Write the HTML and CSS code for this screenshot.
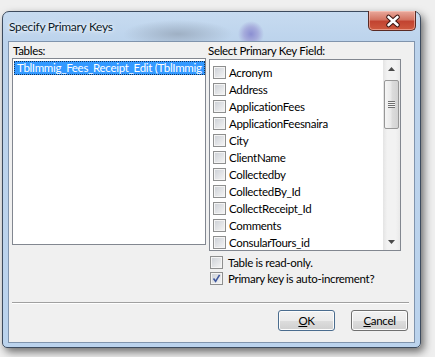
FILE: index.html
```html
<!DOCTYPE html>
<html lang="en">
<head>
    <meta charset="UTF-8" />
    <title>Specify Primary Keys</title>
    <link rel="stylesheet" href="styles.css">
</head>
<body>
<div class="window">
    <div class="titlebar">
        <span class="title">Specify Primary Keys</span>
        <div class="close">
            <svg width="48" height="20" viewBox="0 0 48 20">
                <path d="M19.5 6 L28.5 14 M28.5 6 L19.5 14" stroke="#3a1410" stroke-width="4.6" stroke-linecap="round" fill="none"/>
                <path d="M19.5 6 L28.5 14 M28.5 6 L19.5 14" stroke="#fff" stroke-width="2.6" stroke-linecap="round" fill="none"/>
            </svg>
        </div>
    </div>
    <div class="client">
        <div class="panes">
            <div class="pane pane-tables">
                <div class="label">Tables:</div>
                <div class="listbox tables">
                    <div class="item selected">TblImmig_Fees_Receipt_Edit (TblImmig</div>
                </div>
            </div>
            <div class="pane pane-fields">
                <div class="label">Select Primary Key Field:</div>
                <div class="listbox fields">
                    <ul class="field-list">
                        <li><span class="box"></span>Acronym</li>
                        <li><span class="box"></span>Address</li>
                        <li><span class="box"></span>ApplicationFees</li>
                        <li><span class="box"></span>ApplicationFeesnaira</li>
                        <li><span class="box"></span>City</li>
                        <li><span class="box"></span>ClientName</li>
                        <li><span class="box"></span>Collectedby</li>
                        <li><span class="box"></span>CollectedBy_Id</li>
                        <li><span class="box"></span>CollectReceipt_Id</li>
                        <li><span class="box"></span>Comments</li>
                        <li><span class="box"></span>ConsularTours_id</li>
                    </ul>
                    <div class="scrollbar">
                        <div class="arrow">
                            <svg width="7" height="4" viewBox="0 0 7 4"><path d="M0 4 L3.5 0 L7 4 Z" fill="#4a4a4a"/></svg>
                        </div>
                        <div class="thumb"><span class="grip"></span></div>
                        <div class="track"></div>
                        <div class="arrow">
                            <svg width="7" height="4" viewBox="0 0 7 4"><path d="M0 0 L7 0 L3.5 4 Z" fill="#4a4a4a"/></svg>
                        </div>
                    </div>
                </div>
                <div class="options">
                    <div class="check"><span class="box"></span>Table is read-only.</div>
                    <div class="check">
                        <span class="box">
                            <svg width="11" height="11" viewBox="0 0 11 11"><path d="M2.5 5.5 L4.6 8.3 L8.6 1.8" stroke="#3f579e" stroke-width="1.6" fill="none"/></svg>
                        </span>Primary key is auto-increment?
                    </div>
                </div>
            </div>
        </div>
        <div class="separator"></div>
        <div class="buttons">
            <button class="btn default"><u>O</u>K</button>
            <button class="btn"><u>C</u>ancel</button>
        </div>
    </div>
</div>
</body>
</html>
```

FILE: styles.css
```css
* {
    box-sizing: border-box;
}
body {
    margin: 0;
    height: 357px;
    overflow: hidden;
    background: #efefef;
    font-family: Lato, "Open Sans", sans-serif;
    font-size: 11.5px;
    letter-spacing: -0.3px;
    color: #000;
}
.window {
    margin: 11px 0 0 2px;
    width: 419px;
    height: 337px;
    padding: 0 5px 4px;
    border: 1px solid #3d4b5e;
    border-radius: 7px 7px 5px 5px;
    background:
        radial-gradient(circle at 248px 22px, #8b8fd2 0, #a6acdc 7px, rgba(190,205,235,0) 13px),
        radial-gradient(ellipse 55px 14px at 175px 22px, #9fb0c4 0, rgba(180,198,220,0) 100%),
        linear-gradient(to bottom, #c7dbf0, #bcd3ec 30px, #bbd3ed);
    box-shadow: 3px 4px 9px rgba(0, 0, 0, 0.55);
}
.titlebar {
    height: 29px;
    display: flex;
    justify-content: space-between;
    align-items: flex-start;
}
.title {
    padding: 8px 0 0 1px;
    line-height: 14px;
    font-size: 12px;
    color: #0b1a2b;
    text-shadow: 0 0 6px #fff, 0 0 3px #fff;
}
.close {
    width: 48px;
    height: 20px;
    margin: -1px -1px 0 0;
    border: 1px solid #5a2a24;
    border-top: none;
    border-radius: 0 0 5px 5px;
    background: linear-gradient(to bottom, #e9a99c, #d47563 45%, #c24431 55%, #cf5a3f);
    box-shadow: inset 0 0 0 1px rgba(255, 210, 200, 0.5);
}
.close svg {
    display: block;
}
.client {
    height: 302px;
    border: 1px solid #8094ad;
    background: #f0f0f0;
}
.panes {
    display: flex;
    gap: 3px;
    padding: 1px 0 0 3px;
}
.pane-tables {
    width: 194px;
}
.pane-fields {
    width: 192px;
}
.label {
    height: 15px;
    line-height: 15px;
    padding-left: 1px;
}
.pane-fields .label {
    height: 16px;
    margin-left: -2px;
}
.listbox {
    background: #fff;
    border: 1px solid #828790;
    overflow: hidden;
}
.tables {
    height: 187px;
    padding: 2px 0 0 1px;
}
.item {
    height: 14px;
    line-height: 12px;
    padding-left: 2px;
    white-space: nowrap;
    overflow: hidden;
}
.selected {
    background: #3399ff;
    color: #fff;
    border: 1px dotted #14335a;
}
.fields {
    height: 192px;
    display: flex;
}
.field-list {
    flex: 1;
    margin: 0;
    padding: 4px 0 0 3px;
    list-style: none;
    overflow: hidden;
}
.field-list li {
    height: 17px;
    display: flex;
    align-items: center;
    white-space: nowrap;
}
.box {
    width: 13px;
    height: 13px;
    flex: none;
    margin-right: 3px;
    border: 1px solid #8e8f8f;
    background: linear-gradient(135deg, #cbcfd5, #f6f6f6);
    box-shadow: inset 0 0 0 1px #f4f4f4;
}
.box svg {
    display: block;
}
.scrollbar {
    width: 17px;
    display: flex;
    flex-direction: column;
    background: linear-gradient(to right, #e4e4e4, #f2f2f2 25%, #f2f2f2 75%, #e9e9e9);
}
.arrow {
    height: 17px;
    display: flex;
    align-items: center;
    justify-content: center;
}
.thumb {
    height: 49px;
    margin: 3px 1px 0;
    border: 1px solid #979797;
    border-radius: 2px;
    background: linear-gradient(to right, #f5f5f5, #e9e9e9 45%, #dcdcdc 55%, #d2d2d2);
    display: flex;
    align-items: center;
    justify-content: center;
}
.grip {
    width: 7px;
    height: 7px;
    background: repeating-linear-gradient(to bottom, #6f6f6f 0, #6f6f6f 1px, #f4f4f4 1px, #f4f4f4 2px);
}
.track {
    flex: 1;
}
.options {
    padding-top: 3px;
}
.check {
    height: 16px;
    display: flex;
    align-items: center;
    padding-left: 1px;
}
.check .box {
    margin-right: 5px;
}
.separator {
    margin: 16px 5px 0 3px;
    height: 2px;
    border-top: 1px solid #a0a0a0;
    border-bottom: 1px solid #fff;
}
.buttons {
    display: flex;
    justify-content: flex-end;
    gap: 16px;
    padding: 6px 6px 0 0;
}
.btn {
    width: 57px;
    height: 21px;
    padding: 0;
    font: inherit;
    letter-spacing: inherit;
    color: #000;
    border: 1px solid #707070;
    border-radius: 3px;
    background: linear-gradient(to bottom, #f2f2f2, #ebebeb 50%, #dddddd 51%, #cfcfcf);
    box-shadow: inset 0 0 0 1px #fcfcfc;
}
.default {
    border-color: #4a6c8e;
}
```
